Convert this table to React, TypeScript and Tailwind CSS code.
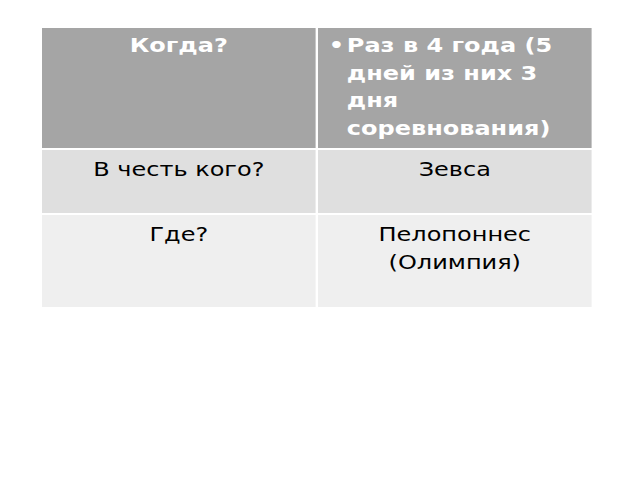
import React from 'react';

const font = { fontFamily: '"DejaVu Sans", sans-serif' };

// the slide was stretched sideways, so the table is drawn narrow and widened by scale-x
export default function App() {
  return (
    <div className="w-[640px] h-[480px] bg-white pt-[28px] pl-[42px] overflow-hidden" style={font}>
      <div className="w-[458px] origin-left scale-x-[1.2] grid grid-cols-2 grid-rows-[120px_63px_92px] gap-x-[2px] gap-y-[2px] bg-white text-[20px] leading-[27.5px]">
        <div className="bg-[#a5a5a5] text-white font-bold text-center pt-[4px]">Когда?</div>
        <div className="bg-[#a5a5a5] text-white font-bold pt-[4px] pl-[9px] pr-[10px] flex">
          <span className="w-[15px] shrink-0">•</span>
          <span>Раз в 4 года (5 дней из них 3 дня соревнования)</span>
        </div>
        <div className="bg-[#dfdfdf] text-black text-center pt-[6px]">В честь кого?</div>
        <div className="bg-[#dfdfdf] text-black text-center pt-[6px]">Зевса</div>
        <div className="bg-[#efefef] text-black text-center pt-[6px]">Где?</div>
        <div className="bg-[#efefef] text-black text-center pt-[6px] px-2">Пелопоннес (Олимпия)</div>
      </div>
    </div>
  );
}
